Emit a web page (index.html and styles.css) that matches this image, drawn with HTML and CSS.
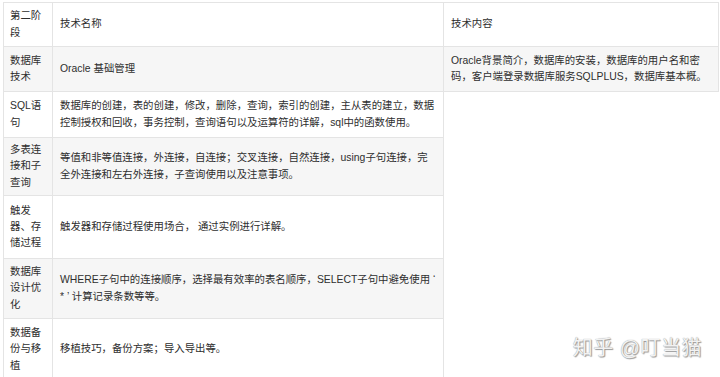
FILE: index.html
```html
<!DOCTYPE html>
<html lang="zh-CN">
<head>
<meta charset="utf-8">
<title>Oracle 学习路线</title>
<link rel="stylesheet" href="styles.css">
</head>
<body>
<div class="page">
  <table class="plan">
    <colgroup>
      <col class="c-stage">
      <col class="c-name">
      <col class="c-desc">
    </colgroup>
    <tr class="r-head">
      <td class="stage">第二阶段</td>
      <td class="name">技术名称</td>
      <td class="desc">技术内容</td>
    </tr>
    <tr class="r-2 alt">
      <td class="stage">数据库技术</td>
      <td class="name">Oracle 基础管理</td>
      <td class="desc">Oracle背景简介，数据库的安装，数据库的用户名和密码，客户端登录数据库服务SQLPLUS，数据库基本概。</td>
    </tr>
    <tr class="r-3">
      <td class="stage">SQL语句</td>
      <td class="name">数据库的创建，表的创建，修改，删除，查询，索引的创建，主从表的建立，数据控制授权和回收，事务控制，查询语句以及运算符的详解，sql中的函数使用。</td>
    </tr>
    <tr class="r-4 alt">
      <td class="stage">多表连接和子查询</td>
      <td class="name">等值和非等值连接，外连接，自连接；交叉连接，自然连接，using子句连接，完全外连接和左右外连接，子查询使用以及注意事项。</td>
    </tr>
    <tr class="r-5">
      <td class="stage">触发器、存储过程</td>
      <td class="name">触发器和存储过程使用场合， 通过实例进行详解。</td>
    </tr>
    <tr class="r-6 alt">
      <td class="stage">数据库设计优化</td>
      <td class="name">WHERE子句中的连接顺序，选择最有效率的表名顺序，SELECT子句中避免使用 ‘ * ’ 计算记录条数等等。</td>
    </tr>
    <tr class="r-7">
      <td class="stage">数据备份与移植</td>
      <td class="name">移植技巧，备份方案；导入导出等。</td>
    </tr>
  </table>
  <div class="watermark">知乎 @叮当猫</div>
</div>
</body>
</html>
```
FILE: styles.css
```css
html, body {
  margin: 0;
  padding: 0;
  background: #ffffff;
}
body {
  font-family: "Liberation Sans", "Noto Sans CJK SC", sans-serif;
  font-size: 10.4px;
  color: #2e2e2e;
  overflow: hidden;
}
.page {
  position: relative;
  width: 720px;
  height: 377px;
  padding: 2px 2px 0 3px;
  box-sizing: border-box;
  overflow: hidden;
}
.plan {
  width: 715px;
  table-layout: fixed;
  border-collapse: collapse;
}
.c-stage { width: 49px; }
.c-name { width: 391px; }
.c-desc { width: 275px; }
.plan td {
  padding: 4px 7px;
  line-height: 16.2px;
  vertical-align: middle;
  border: 1px solid #e4e4e4;
  word-break: break-all;
}
.plan td.stage {
  padding-left: 6px;
  padding-right: 6px;
}
.plan tr.alt td {
  background: #f6f6f6;
}
.r-head { height: 44px; }
.r-2 { height: 45px; }
.r-3 { height: 46px; }
.r-4 { height: 58px; }
.r-5 { height: 63px; }
.r-6 { height: 60px; }
.r-7 { height: 62px; }
.watermark {
  position: absolute;
  right: 18px;
  bottom: 18px;
  font-size: 20px;
  line-height: 22px;
  letter-spacing: 0.5px;
  color: #f2f2f2;
  text-shadow: 0 0 1px #8a8a8a, 1px 1px 1px #9a9a9a;
}
```
